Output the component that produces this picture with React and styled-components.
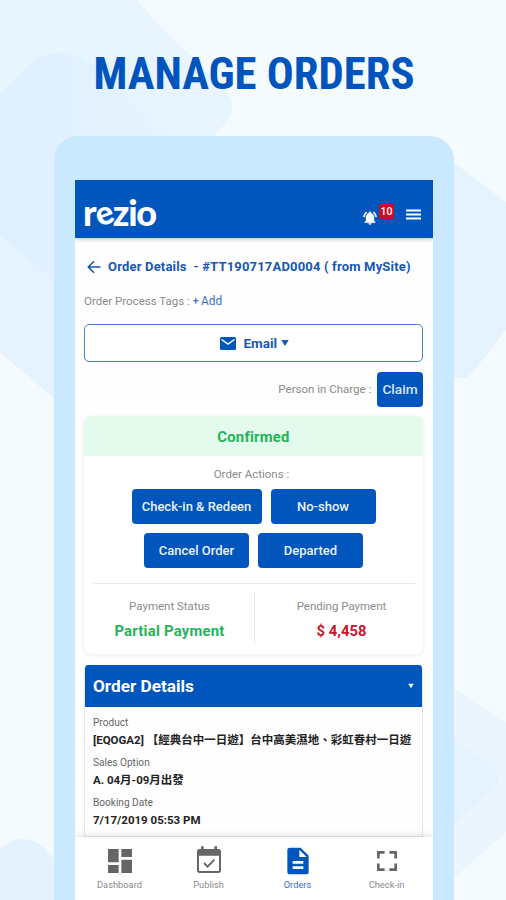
import React from 'react';
import styled, { createGlobalStyle } from 'styled-components';

const Global = createGlobalStyle`
  *{box-sizing:border-box}
  html,body{margin:0;padding:0;overflow:hidden}
  body{font-family:Roboto,"Noto Sans CJK TC",sans-serif;}
`;
const Page = styled.main`
  width:506px;height:900px;position:relative;overflow:hidden;isolation:isolate;padding-left:2px;
  display:flex;flex-direction:column;align-items:center;background:#f4fbff;
`;
const Backdrop = styled.svg`position:absolute;inset:0;z-index:-1;`;
const Title = styled.h1`
  margin:45px 0 0;height:91px;line-height:58px;font-size:44.7px;font-weight:700;color:#0054bd;
  white-space:nowrap;font-stretch:75%;font-family:"Roboto Condensed",Roboto,sans-serif;
`;
const Phone = styled.section`
  width:400px;flex:1;background:#cae9ff;border-radius:24px 24px 0 0;padding:44px 21px 0;
  display:flex;flex-direction:column;
`;
const Screen = styled.div`
  width:358px;height:720px;background:#fefefe;display:flex;flex-direction:column;overflow:hidden;
`;
const Header = styled.header`
  height:58px;flex:none;background:#0056bc;display:flex;align-items:center;padding:0 12px 0 8px;
  color:#fff;box-shadow:0 1px 4px #0004;
`;
const Logo = styled.div`
  font:900 36px/40px Lato,sans-serif;margin-top:5px;flex:1;letter-spacing:-1.3px;
`;
const Slant = styled.span`display:inline-block;transform:rotate(-20deg) scale(.92);margin:0 .5px 0 -1px;`;
const Bell = styled.svg`width:16px;height:16px;margin-top:17px;`;
const Count = styled.span`
  width:15px;height:15px;border-radius:2px;background:#cf0a24;font-size:10.5px;line-height:15px;font-weight:500;
  text-align:center;margin:5px 12px 0 1px;
`;
const Menu = styled.svg`width:15px;height:12px;margin-top:12px;`;
const Body = styled.div`
  flex:1;padding:0 10px 0 9px;display:flex;flex-direction:column;min-height:0;overflow:hidden;
`;
const T = styled.span`
  white-space:pre;font-size:${p => p.$s}px;line-height:${p => p.$lh || 16}px;
  font-weight:${p => p.$w || 400};color:${p => p.$c || '#8b8b8b'};letter-spacing:${p => p.$ls || 0}px;
`;
const Crumb = styled.div`display:flex;align-items:center;height:18px;margin-top:20px;padding-left:3px;gap:7px;`;
const Arrow = styled.svg`width:14px;height:14px;flex:none;`;
const Tags = styled.div`display:flex;height:16px;margin-top:17px;`;
const Email = styled.button`
  height:38px;flex:none;margin:15px 0 0;border:1px solid #4b80cc;border-radius:5px;background:#fff;
  padding:0 0 0 2px;display:flex;align-items:center;justify-content:center;font-family:inherit;
`;
const Mail = styled.svg`width:16px;height:13px;margin-right:7px;`;
const Caret = styled.svg`width:${p => p.$size}px;height:${p => p.$size}px;flex:none;`;
const Charge = styled.div`display:flex;align-items:center;justify-content:flex-end;height:34px;margin-top:10px;`;
const Button = styled.button`
  border:0;padding:0;border-radius:4px;background:#0056bc;width:${p => p.$w}px;height:35px;
  display:flex;align-items:center;justify-content:center;font-family:inherit;
`;
const Card = styled.section`
  height:238px;flex:none;margin-top:10px;border-radius:7px;background:#fff;box-shadow:0 1px 4px #00000014;
  display:flex;flex-direction:column;align-items:center;overflow:clip;
`;
const Status = styled.div`
  height:40px;width:100%;background:#e4faec;display:flex;align-items:center;justify-content:center;padding-top:2px;
`;
const Actions = styled.div`display:flex;flex-direction:column;align-items:center;padding-top:10px;gap:9px;`;
const ActionLabel = styled.div`display:flex;height:14px;padding-right:4px;`;
const ActionRow = styled.div`display:flex;gap:9px;`;
const Payments = styled.div`
  width:322px;margin-top:15px;border-top:1px solid #e9e9e9;padding-top:8px;display:grid;grid-template-columns:161px 161px;
`;
const Payment = styled.div`
  height:52px;display:flex;flex-direction:column;align-items:center;padding-top:6px;gap:9px;
  &+&{border-left:1px solid #e9e9e9;padding-left:14px;}
  &:first-child{padding-right:7px;}
`;
const Details = styled.section`margin-top:11px;border-radius:4px 4px 0 0;overflow:hidden;flex:1;border:1px solid #e8e8e8;border-top:0;`;
const DetailsHead = styled.div`
  height:42px;margin:0 -1px;background:#0056bc;display:flex;align-items:center;justify-content:space-between;padding:0 9px 0 9px;
`;
const Fields = styled.div`display:flex;flex-direction:column;padding:8px 8px;gap:4px;`;
const Field = styled.div`display:flex;flex-direction:column;height:36px;`;
const Tabs = styled.nav`
  height:63px;flex:none;background:#fff;display:flex;justify-content:space-around;box-shadow:0 -2px 6px #0000001c;z-index:1;padding-right:2px;
`;
const Tab = styled.div`width:89px;display:flex;flex-direction:column;align-items:center;padding-top:8px;`;
const TabIcon = styled.svg`width:32px;height:32px;`;

const blue = '#1757b5';
const DownCaret = ({ size, color }) => (
  <Caret $size={size} viewBox="0 0 8 8"><path d="M.3 1h7.4L4 7z" fill={color} /></Caret>
);
const fields = [
  ['Product', '[EQOGA2] 【經典台中一日遊】台中高美濕地、彩虹眷村一日遊'],
  ['Sales Option', 'A. 04月-09月出發'],
  ['Booking Date', '7/17/2019 05:53 PM'],
];
const tabs = [
  ['Dashboard', <path d="M3 3h8v10H3zM13 3h8v6h-8zM13 11h8v10h-8zM3 15h8v6H3z" />],
  ['Publish', <path d="M19 3h-1V1h-2v2H8V1H6v2H5a2 2 0 0 0-2 2v14a2 2 0 0 0 2 2h14a2 2 0 0 0 2-2V5a2 2 0 0 0-2-2zm.5 16.500h-15V8h15zM16.500 11.500l-1-1-4.600 4.600-2.100-2.100-1 1 3.100 3.200z" />],
  ['Orders', <path d="M14 2H6a2 2 0 0 0-2 2v16a2 2 0 0 0 2 2h12a2 2 0 0 0 2-2V8zm2 16H8v-2h8zm0-4H8v-2h8zm-3-5V3.500L18.500 9z" />],
  ['Check-in', <path d="M4.500 4.500h5.700v2H6.500v3.700h-2zM13.800 4.500h5.700v5.700h-2V6.500h-3.700zM4.500 13.800h2v3.700h3.700v2H4.500zM17.500 13.800h2v5.700h-5.700v-2h3.700z" />],
];

export default function App() {
  return (
    <Page>
      <Global />
      <Backdrop width="506" height="900">
        <defs>
          <linearGradient id="blob" x1="0" y1="0" x2="1" y2="0">
            <stop offset="0" stopColor="#deeffe" />
            <stop offset="1" stopColor="#e6f3fe" />
          </linearGradient>
        </defs>
        <path d="M0 0H137Q150 16 160 26L222 86Q240 106 225 124L190 160H0z" fill="#e8f4fe" />
        <path d="M0 95L25 68Q60 38 92 65L170 140V460L54 398L0 352z" fill="url(#blob)" />
        <path d="M0 235L54 280V398L0 352z" fill="#e4f3fe" />
        <path d="M440 152L506 202V330L472 373Q464 384 440 372z" fill="#e5f3fe" />
        <path d="M440 680L506 722V832L440 890z" fill="#eaf5fe" />
        <path d="M440 730L490 765Q506 778 490 792L440 835z" fill="#e5f3fe" />
        <path d="M0 848Q24 830 44 848L100 900H0z" fill="#e4f2fe" />
      </Backdrop>
      <Title>MANAGE ORDERS</Title>
      <Phone>
        <Screen>
          <Header>
            <Logo>r<Slant>e</Slant>zio</Logo>
            <Bell viewBox="0 0 24 24" fill="#fff"><path d="M7.600 4.100 6.200 2.700C3.800 4.500 2.200 7.300 2 10.500h2c.2-2.700 1.500-5 3.600-6.400zM20 10.500h2c-.2-3.200-1.700-6-4.100-7.800l-1.400 1.400c2 1.400 3.300 3.700 3.500 6.400zM18 11c0-3.100-1.600-5.600-4.500-6.300V4a1.500 1.500 0 0 0-3 0v.7C7.600 5.400 6 7.900 6 11v5l-2 2v1h16v-1l-2-2zM12 22a2 2 0 0 0 2-2h-4a2 2 0 0 0 2 2z" stroke="#fff" strokeWidth=".5" /></Bell>
            <Count>10</Count>
            <Menu viewBox="0 0 15 12"><path d="M0 1.500h15M0 5.500h15M0 9.500h15" stroke="#fff" strokeWidth="2" /></Menu>
          </Header>
          <Body>
            <Crumb>
              <Arrow viewBox="0 0 14 14"><path d="M13.500 7H1.500M7 1.300 1.300 7 7 12.700" fill="none" stroke={blue} strokeWidth="1.600" /></Arrow>
              <T $s={13} $w={700} $c={blue} $ls={0.18}>{'Order Details  - #TT190717AD0004 ( from MySite)'}</T>
            </Crumb>
            <Tags><T $s={11.5}>{'Order Process Tags : '}</T><T $s={10.5} $c="#3b70c4" $w={500}>{'+ '}</T><T $s={11.9} $c="#3b70c4">Add</T></Tags>
            <Email>
              <Mail viewBox="0 0 16 13"><rect width="16" height="13" rx="1.500" fill="#0056bc" /><path d="M1.500 2.500 8 7 14.500 2.500" fill="none" stroke="#fff" strokeWidth="1.500" /></Mail>
              <T $s={13.5} $w={700} $c={blue}>{'Email '}</T><DownCaret size={8} color={blue} />
            </Email>
            <Charge><T $s={11.5}>{'Person in Charge :  '}</T><Button $w={46}><T $s={13.7} $w={500} $c="#d6e6fa">Claim</T></Button></Charge>
            <Card>
              <Status><T $s={14.8} $w={700} $c="#20b558" $ls={0.25}>Confirmed</T></Status>
              <Actions>
                <ActionLabel><T $s={11.5}>Order Actions :</T></ActionLabel>
                <ActionRow>
                  <Button $w={130}><T $s={13} $w={500} $c="#e8f1fc">{'Check-in & Redeen'}</T></Button>
                  <Button $w={105}><T $s={13} $w={500} $c="#e8f1fc">No-show</T></Button>
                </ActionRow>
                <ActionRow>
                  <Button $w={105}><T $s={13} $w={500} $c="#e8f1fc">Cancel Order</T></Button>
                  <Button $w={105}><T $s={13} $w={500} $c="#e8f1fc">Departed</T></Button>
                </ActionRow>
              </Actions>
              <Payments>
                <Payment><T $s={11.5}>Payment Status</T><T $s={14.8} $w={700} $c="#20b558" $ls={0.25}>Partial Payment</T></Payment>
                <Payment><T $s={11.5}>Pending Payment</T><T $s={14.8} $w={700} $c="#c9142c">$ 4,458</T></Payment>
              </Payments>
            </Card>
            <Details>
              <DetailsHead><T $s={17.2} $w={700} $c="#fff" $lh={20}>Order Details</T><DownCaret size={6} color="#fff" /></DetailsHead>
              <Fields>
                {fields.map(([label, value]) => (
                  <Field key={label}><T $s={10.1} $c="#666">{label}</T><T $s={11.5} $w={700} $c="#222" $lh={18}>{value}</T></Field>
                ))}
              </Fields>
            </Details>
          </Body>
          <Tabs>
            {tabs.map(([label, icon]) => (
              <Tab key={label}>
                <TabIcon viewBox="0 0 24 24" fill={label === 'Orders' ? '#0056bc' : '#666'}>{icon}</TabIcon>
                <T $s={9.3} $lh={15} $c={label === 'Orders' ? '#3b70c4' : '#8b8b8b'}>{label}</T>
              </Tab>
            ))}
          </Tabs>
        </Screen>
      </Phone>
    </Page>
  );
}
